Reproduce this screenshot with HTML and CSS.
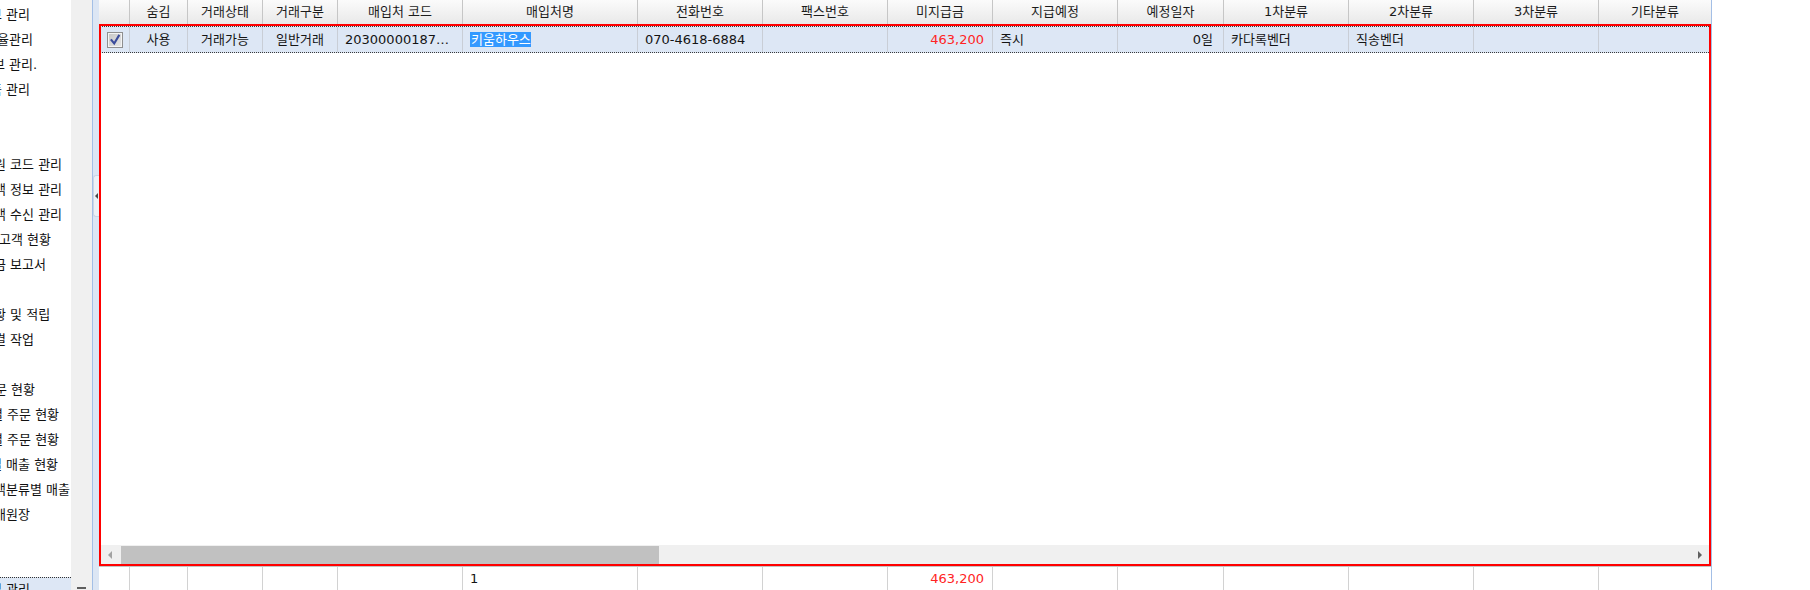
FILE: index.html
```html
<!DOCTYPE html>
<html lang="ko">
<head>
<meta charset="utf-8">
<title>매입처 관리</title>
<link rel="stylesheet" href="styles.css">
</head>
<body>
<div class="app">
  <aside class="nav">
    <div class="nav-item"><span class="nav-text cut-10">브 관리</span></div>
    <div class="nav-item"><span class="nav-text cut-3">율관리</span></div>
    <div class="nav-item"><span class="nav-text cut-7">브 관리.</span></div>
    <div class="nav-item"><span class="nav-text cut-10">품 관리</span></div>
    <div class="nav-item"></div>
    <div class="nav-item"></div>
    <div class="nav-item"><span class="nav-text">원 코드 관리</span></div>
    <div class="nav-item"><span class="nav-text">객 정보 관리</span></div>
    <div class="nav-item"><span class="nav-text">객 수신 관리</span></div>
    <div class="nav-item"><span class="nav-text cut-1">고객 현황</span></div>
    <div class="nav-item"><span class="nav-text">금 보고서</span></div>
    <div class="nav-item"></div>
    <div class="nav-item"><span class="nav-text">황 및 적립</span></div>
    <div class="nav-item"><span class="nav-text">결 작업</span></div>
    <div class="nav-item"></div>
    <div class="nav-item"><span class="nav-text cut-5">문 현황</span></div>
    <div class="nav-item"><span class="nav-text cut-9">별 주문 현황</span></div>
    <div class="nav-item"><span class="nav-text cut-9">별 주문 현황</span></div>
    <div class="nav-item"><span class="nav-text cut-10">별 매출 현황</span></div>
    <div class="nav-item"><span class="nav-text">객분류별 매출</span></div>
    <div class="nav-item"><span class="nav-text">매원장</span></div>
    <div class="nav-item"></div>
    <div class="nav-item"></div>
    <div class="nav-item is-current"><span class="nav-text cut-10">별 관리</span></div>
  </aside>

  <div class="nav-rail"><span class="rail-mark"></span></div>

  <div class="splitter">
    <div class="split-handle"><span class="split-arrow"></span></div>
  </div>

  <section class="grid">
    <div class="grid-head cols">
      <div class="hcell"></div>
      <div class="hcell">숨김</div>
      <div class="hcell">거래상태</div>
      <div class="hcell">거래구분</div>
      <div class="hcell">매입처 코드</div>
      <div class="hcell">매입처명</div>
      <div class="hcell">전화번호</div>
      <div class="hcell">팩스번호</div>
      <div class="hcell">미지급금</div>
      <div class="hcell">지급예정</div>
      <div class="hcell">예정일자</div>
      <div class="hcell">1차분류</div>
      <div class="hcell">2차분류</div>
      <div class="hcell">3차분류</div>
      <div class="hcell hcell-last">기타분류</div>
    </div>

    <div class="grid-body">
      <div class="grid-row cols">
        <div class="cell cell-check">
          <svg class="check" width="16" height="16" viewBox="0 0 16 16">
            <defs>
              <linearGradient id="cbg" x1="0" y1="0" x2="1" y2="1">
                <stop offset="0" stop-color="#c9c9c9"/>
                <stop offset="1" stop-color="#e4e4e4"/>
              </linearGradient>
            </defs>
            <rect x="0.5" y="0.5" width="15" height="15" fill="#f4f4f4" stroke="#8f8f8f"/>
            <rect x="2" y="2" width="12" height="12" fill="url(#cbg)"/>
            <path d="M4.5 8.2 L7.2 11.5 L11.8 3.8" fill="none" stroke="#3b4c9c" stroke-width="2.1" stroke-linecap="square" stroke-linejoin="miter"/>
          </svg>
        </div>
        <div class="cell c-center">사용</div>
        <div class="cell c-center">거래가능</div>
        <div class="cell c-center">일반거래</div>
        <div class="cell c-left">20300000187…</div>
        <div class="cell c-left"><span class="sel">키움하우스</span></div>
        <div class="cell c-left">070-4618-6884</div>
        <div class="cell"></div>
        <div class="cell c-right c-red">463,200</div>
        <div class="cell c-left">즉시</div>
        <div class="cell c-right c-right-wide">0일</div>
        <div class="cell c-left">카다록벤더</div>
        <div class="cell c-left">직송벤더</div>
        <div class="cell"></div>
        <div class="cell cell-last"></div>
      </div>

      <div class="grid-empty"></div>

      <div class="hscroll">
        <div class="sb-btn"><span class="sb-arrow-left"></span></div>
        <div class="sb-thumb"></div>
        <div class="sb-track"></div>
        <div class="sb-btn"><span class="sb-arrow-right"></span></div>
      </div>
    </div>

    <div class="grid-foot cols">
      <div class="fcell"></div>
      <div class="fcell"></div>
      <div class="fcell"></div>
      <div class="fcell"></div>
      <div class="fcell"></div>
      <div class="fcell c-left">1</div>
      <div class="fcell"></div>
      <div class="fcell"></div>
      <div class="fcell c-right c-red">463,200</div>
      <div class="fcell"></div>
      <div class="fcell"></div>
      <div class="fcell"></div>
      <div class="fcell"></div>
      <div class="fcell"></div>
      <div class="fcell fcell-last"></div>
    </div>

    <div class="focus-frame"></div>
  </section>

  <div class="right-pad"></div>
</div>
</body>
</html>
```

FILE: styles.css
```css
* {
  box-sizing: border-box;
}

html, body {
  margin: 0;
  padding: 0;
  background: #ffffff;
}

body {
  width: 1810px;
  height: 590px;
  overflow: hidden;
  font-family: "DejaVu Sans", "Noto Sans CJK KR", sans-serif;
  font-size: 13px;
  color: #1a1a1a;
}

.app {
  display: flex;
  width: 1810px;
  height: 590px;
}

/* ---------- left navigation (scrolled) ---------- */
.nav {
  width: 71px;
  flex: none;
  height: 590px;
  overflow: hidden;
  background: #ffffff;
  padding-top: 2px;
}

.nav-item {
  height: 25px;
  line-height: 25px;
  white-space: nowrap;
  overflow: hidden;
  color: #111111;
}

.nav-text {
  margin-left: -6px;
}

.nav-text.cut-10 { margin-left: -10px; }
.nav-text.cut-9 { margin-left: -9px; }
.nav-text.cut-7 { margin-left: -7px; }
.nav-text.cut-5 { margin-left: -5px; }
.nav-text.cut-3 { margin-left: -3px; }
.nav-text.cut-1 { margin-left: -1px; }

.nav-item.is-current {
  background: #dde7f5;
  border-top: 1px dotted #333333;
  line-height: 24px;
}

.nav-rail {
  width: 21px;
  flex: none;
  background: #f0f0f0;
  display: flex;
  flex-direction: column;
  justify-content: flex-end;
  padding: 0 6px 1px 6px;
}

.rail-mark {
  display: block;
  height: 2px;
  background: #5e5e5e;
}

/* ---------- splitter ---------- */
.splitter {
  width: 7px;
  flex: none;
  background: #dce6f4;
  border-left: 1px solid #a3bfe6;
  padding-top: 175px;
}

.split-handle {
  width: 6px;
  height: 42px;
  background: #edf1f7;
  border: 1px solid #cbd6e6;
  border-right: none;
  border-radius: 3px 0 0 3px;
  display: flex;
  align-items: center;
  justify-content: flex-start;
  padding-left: 1px;
}

.split-arrow {
  width: 0;
  height: 0;
  border-top: 3px solid transparent;
  border-bottom: 3px solid transparent;
  border-right: 3px solid #4a4a4a;
}

/* ---------- grid ---------- */
.grid {
  position: relative;
  width: 1613px;
  flex: none;
  height: 590px;
  border-right: 1px solid #a3bfe6;
  display: flex;
  flex-direction: column;
  background: #ffffff;
}

.cols {
  display: grid;
  grid-template-columns: 31px 58px 75px 75px 125px 175px 125px 125px 105px 125px 106px 125px 125px 125px 1fr;
}

.grid-head {
  height: 24px;
  flex: none;
  background: linear-gradient(#fbfbfb, #e9e9e9);
}

.hcell {
  border-right: 1px solid #c6c6c6;
  line-height: 24px;
  text-align: center;
  white-space: nowrap;
  overflow: hidden;
  color: #1c1c1c;
}

.hcell-last {
  border-right: none;
}

.grid-body {
  height: 542px;
  flex: none;
  display: flex;
  flex-direction: column;
  padding-top: 2px;
}

.grid-row {
  height: 27px;
  flex: none;
  background: #dde7f5;
  border-top: 1px dotted #3a3a3a;
  border-bottom: 1px dotted #3a3a3a;
}

.cell {
  border-right: 1px solid #c9ced6;
  line-height: 25px;
  white-space: nowrap;
  overflow: hidden;
  color: #141414;
}

.cell-last {
  border-right: none;
}

.cell-check {
  display: flex;
  align-items: center;
  justify-content: center;
  padding-left: 1px;
}

.check {
  display: block;
}

.c-center {
  text-align: center;
}

.c-left {
  text-align: left;
  padding-left: 7px;
}

.c-right {
  text-align: right;
  padding-right: 8px;
}

.c-right-wide {
  padding-right: 10px;
}

.sel {
  display: inline-block;
  line-height: 15px;
  vertical-align: middle;
  background: #3399ff;
  color: #ffffff;
  padding: 0 0 0 1px;
  margin-top: -2px;
}

.grid-empty {
  flex: 1;
}

.hscroll {
  height: 21px;
  flex: none;
  background: #f0f0f0;
  display: flex;
}

.sb-btn {
  width: 22px;
  flex: none;
  display: flex;
  align-items: center;
  justify-content: center;
  padding-bottom: 2px;
}

.sb-arrow-left {
  width: 0;
  height: 0;
  border-top: 4px solid transparent;
  border-bottom: 4px solid transparent;
  border-right: 4px solid #a3a3a3;
}

.sb-arrow-right {
  width: 0;
  height: 0;
  border-top: 4px solid transparent;
  border-bottom: 4px solid transparent;
  border-left: 4px solid #606060;
}

.sb-thumb {
  width: 538px;
  flex: none;
  margin-top: 1px;
  background: #c1c1c1;
}

.sb-track {
  flex: 1;
}

.grid-foot {
  height: 24px;
  flex: none;
  border-top: 1px solid #c4c4c4;
  background: #ffffff;
}

.fcell {
  border-right: 1px solid #d2d2d2;
  line-height: 23px;
  white-space: nowrap;
  overflow: hidden;
  color: #141414;
}

.fcell-last {
  border-right: none;
}

.cell.c-red,
.fcell.c-red {
  color: #ff2424;
}

/* annotation frame drawn over the grid body */
.focus-frame {
  position: absolute;
  left: 0;
  top: 24px;
  width: 1612px;
  height: 542px;
  border: 2px solid #ff0000;
  pointer-events: none;
}

.right-pad {
  flex: 1;
  background: #ffffff;
}
```
